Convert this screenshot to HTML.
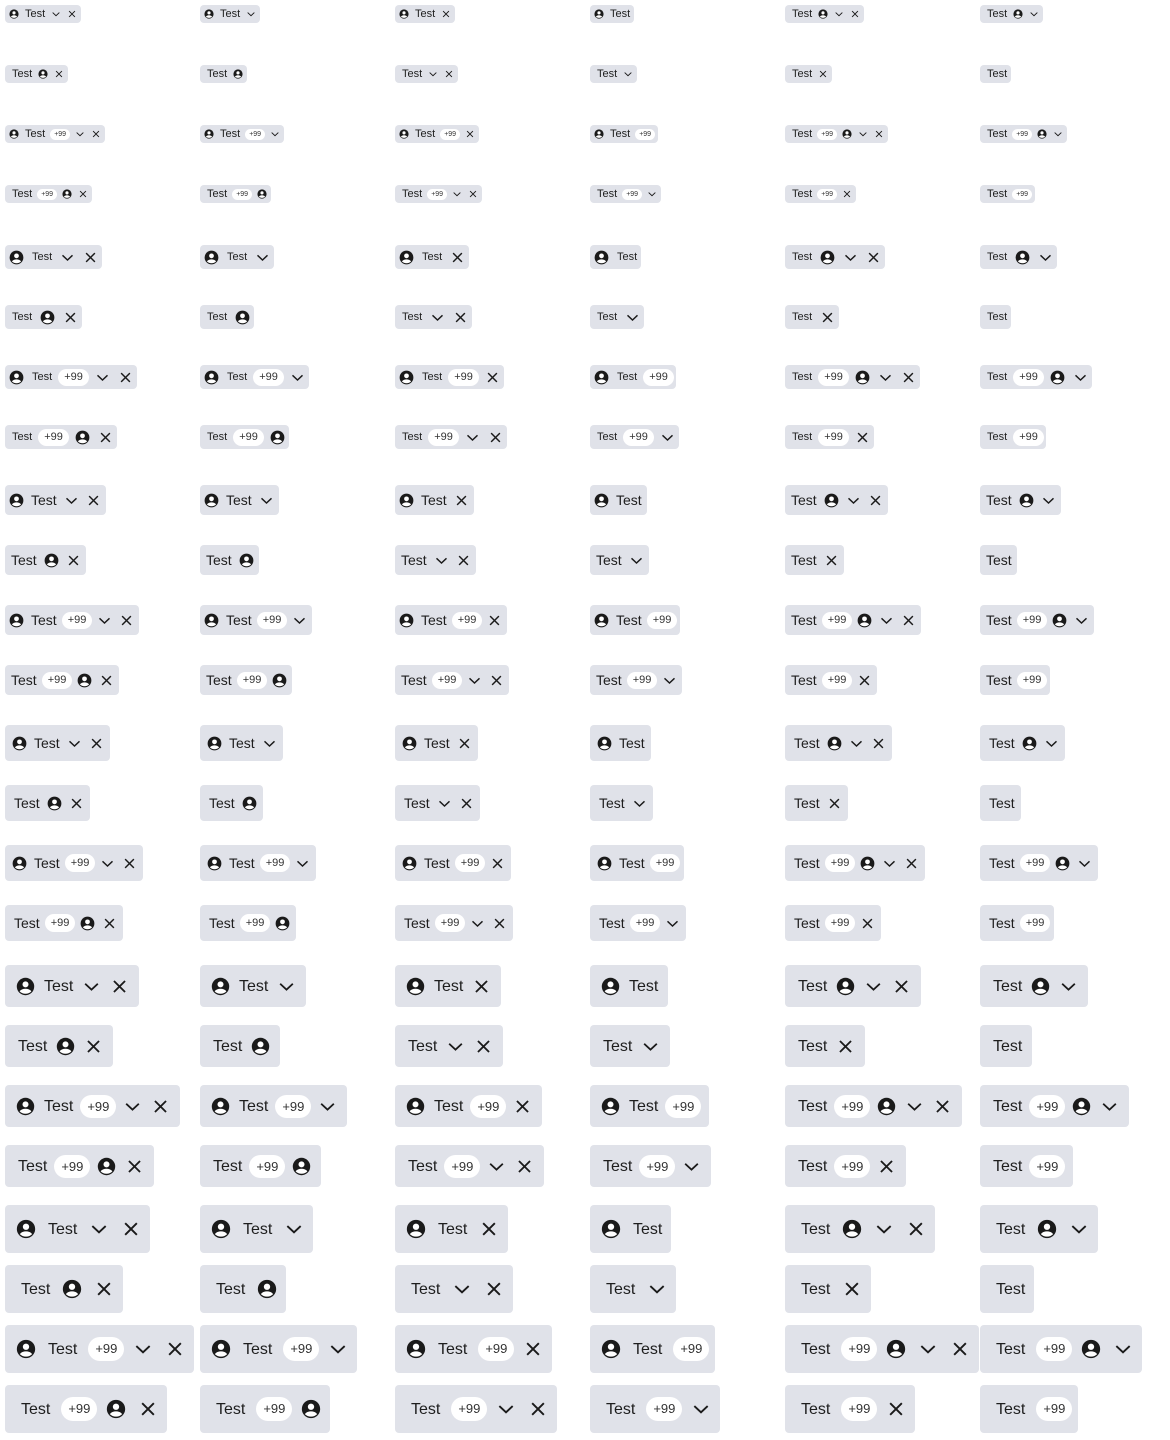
<!DOCTYPE html>
<html><head><meta charset="utf-8"><style>
html,body{margin:0;padding:0;background:#fff;width:1170px;height:1440px;overflow:hidden}
body{position:relative;font-family:"Liberation Sans",sans-serif}
.c{position:absolute;display:flex;align-items:center;background:#e0e2e9;border-radius:4px;color:#1e1e1e;white-space:nowrap;box-sizing:border-box}
.c b{font-weight:400}
.c em{font-style:normal;background:#fff;border-radius:99px;text-align:center;color:#333;display:block;margin:0 -2px}
.c svg{flex:none;display:block}
.s1{height:18px;padding:0 4px;gap:6px;font-size:11px}.s1.t{padding-left:7px}.s1 svg{width:10px;height:10px}.s1 em{font-size:7px;height:11px;line-height:11px;padding:0 4px;margin:0 -1px}
.s2{height:24px;padding:0 4px;gap:8px;font-size:11px}.s2.t{padding-left:7px}.s2 svg{width:15px;height:15px}.s2 em{font-size:11px;height:17px;line-height:17px;padding:0 6px}
.s3{height:30px;padding:0 5px 0 4px;gap:7px;font-size:14px}.s3.t{padding-left:6px}.s3 svg{width:15px;height:15px}.s3 em{font-size:11px;height:17px;line-height:17px;padding:0 6px}
.s4{height:36px;padding:0 6px 0 7px;gap:7px;font-size:14px}.s4.t{padding-left:9px}.s4 svg{width:15px;height:15px}.s4 em{font-size:11px;height:18px;line-height:18px;padding:0 6px}
.s5{height:42px;padding:0 10px 0 11px;gap:9px;font-size:16px}.s5.t{padding-left:13px}.s5 svg{width:19px;height:19px}.s5 em{font-size:13px;height:23px;line-height:23px;padding:0 7px}
.s6{height:48px;padding:0 9px 0 11px;gap:12px;font-size:16px}.s6.t{padding-left:16px}.s6 svg{width:20px;height:20px}.s6 em{font-size:13px;height:24px;line-height:24px;padding:0 7px;margin:0 -3px 0 -1px}
.s5 b,.s6 b{position:relative;top:1px}
</style></head><body>
<svg width="0" height="0" style="position:absolute"><defs>
<symbol id="u" viewBox="0 0 24 24"><circle cx="12" cy="12" r="11" fill="#1a1a1a"/><circle cx="12" cy="9.3" r="3.8" fill="#fff"/><path d="M4.6 18.2C6.3 15.9 9 14.9 12 14.9S17.7 15.9 19.4 18.2C17.6 20.1 15 21.2 12 21.2S6.4 20.1 4.6 18.2Z" fill="#fff"/></symbol>
<symbol id="v" viewBox="0 0 24 24"><polyline points="4,8.5 12,16 20,8.5" fill="none" stroke="#1a1a1a" stroke-width="2.3"/></symbol>
<symbol id="x" viewBox="0 0 24 24"><path d="M5 5L19 19M19 5L5 19" fill="none" stroke="#1a1a1a" stroke-width="2.3"/></symbol>
</defs></svg>

<!-- XS -->
<div class="c s1" style="left:5px;top:5px"><svg><use href="#u"/></svg><b>Test</b><svg><use href="#v"/></svg><svg><use href="#x"/></svg></div>
<div class="c s1" style="left:200px;top:5px"><svg><use href="#u"/></svg><b>Test</b><svg><use href="#v"/></svg></div>
<div class="c s1" style="left:395px;top:5px"><svg><use href="#u"/></svg><b>Test</b><svg><use href="#x"/></svg></div>
<div class="c s1" style="left:590px;top:5px"><svg><use href="#u"/></svg><b>Test</b></div>
<div class="c s1 t" style="left:785px;top:5px"><b>Test</b><svg><use href="#u"/></svg><svg><use href="#v"/></svg><svg><use href="#x"/></svg></div>
<div class="c s1 t" style="left:980px;top:5px"><b>Test</b><svg><use href="#u"/></svg><svg><use href="#v"/></svg></div>

<div class="c s1 t" style="left:5px;top:65px"><b>Test</b><svg><use href="#u"/></svg><svg><use href="#x"/></svg></div>
<div class="c s1 t" style="left:200px;top:65px"><b>Test</b><svg><use href="#u"/></svg></div>
<div class="c s1 t" style="left:395px;top:65px"><b>Test</b><svg><use href="#v"/></svg><svg><use href="#x"/></svg></div>
<div class="c s1 t" style="left:590px;top:65px"><b>Test</b><svg><use href="#v"/></svg></div>
<div class="c s1 t" style="left:785px;top:65px"><b>Test</b><svg><use href="#x"/></svg></div>
<div class="c s1 t" style="left:980px;top:65px"><b>Test</b></div>

<div class="c s1" style="left:5px;top:125px"><svg><use href="#u"/></svg><b>Test</b><em>+99</em><svg><use href="#v"/></svg><svg><use href="#x"/></svg></div>
<div class="c s1" style="left:200px;top:125px"><svg><use href="#u"/></svg><b>Test</b><em>+99</em><svg><use href="#v"/></svg></div>
<div class="c s1" style="left:395px;top:125px"><svg><use href="#u"/></svg><b>Test</b><em>+99</em><svg><use href="#x"/></svg></div>
<div class="c s1" style="left:590px;top:125px"><svg><use href="#u"/></svg><b>Test</b><em>+99</em></div>
<div class="c s1 t" style="left:785px;top:125px"><b>Test</b><em>+99</em><svg><use href="#u"/></svg><svg><use href="#v"/></svg><svg><use href="#x"/></svg></div>
<div class="c s1 t" style="left:980px;top:125px"><b>Test</b><em>+99</em><svg><use href="#u"/></svg><svg><use href="#v"/></svg></div>

<div class="c s1 t" style="left:5px;top:185px"><b>Test</b><em>+99</em><svg><use href="#u"/></svg><svg><use href="#x"/></svg></div>
<div class="c s1 t" style="left:200px;top:185px"><b>Test</b><em>+99</em><svg><use href="#u"/></svg></div>
<div class="c s1 t" style="left:395px;top:185px"><b>Test</b><em>+99</em><svg><use href="#v"/></svg><svg><use href="#x"/></svg></div>
<div class="c s1 t" style="left:590px;top:185px"><b>Test</b><em>+99</em><svg><use href="#v"/></svg></div>
<div class="c s1 t" style="left:785px;top:185px"><b>Test</b><em>+99</em><svg><use href="#x"/></svg></div>
<div class="c s1 t" style="left:980px;top:185px"><b>Test</b><em>+99</em></div>

<!-- SM -->
<div class="c s2" style="left:5px;top:245px"><svg><use href="#u"/></svg><b>Test</b><svg><use href="#v"/></svg><svg><use href="#x"/></svg></div>
<div class="c s2" style="left:200px;top:245px"><svg><use href="#u"/></svg><b>Test</b><svg><use href="#v"/></svg></div>
<div class="c s2" style="left:395px;top:245px"><svg><use href="#u"/></svg><b>Test</b><svg><use href="#x"/></svg></div>
<div class="c s2" style="left:590px;top:245px"><svg><use href="#u"/></svg><b>Test</b></div>
<div class="c s2 t" style="left:785px;top:245px"><b>Test</b><svg><use href="#u"/></svg><svg><use href="#v"/></svg><svg><use href="#x"/></svg></div>
<div class="c s2 t" style="left:980px;top:245px"><b>Test</b><svg><use href="#u"/></svg><svg><use href="#v"/></svg></div>

<div class="c s2 t" style="left:5px;top:305px"><b>Test</b><svg><use href="#u"/></svg><svg><use href="#x"/></svg></div>
<div class="c s2 t" style="left:200px;top:305px"><b>Test</b><svg><use href="#u"/></svg></div>
<div class="c s2 t" style="left:395px;top:305px"><b>Test</b><svg><use href="#v"/></svg><svg><use href="#x"/></svg></div>
<div class="c s2 t" style="left:590px;top:305px"><b>Test</b><svg><use href="#v"/></svg></div>
<div class="c s2 t" style="left:785px;top:305px"><b>Test</b><svg><use href="#x"/></svg></div>
<div class="c s2 t" style="left:980px;top:305px"><b>Test</b></div>

<div class="c s2" style="left:5px;top:365px"><svg><use href="#u"/></svg><b>Test</b><em>+99</em><svg><use href="#v"/></svg><svg><use href="#x"/></svg></div>
<div class="c s2" style="left:200px;top:365px"><svg><use href="#u"/></svg><b>Test</b><em>+99</em><svg><use href="#v"/></svg></div>
<div class="c s2" style="left:395px;top:365px"><svg><use href="#u"/></svg><b>Test</b><em>+99</em><svg><use href="#x"/></svg></div>
<div class="c s2" style="left:590px;top:365px"><svg><use href="#u"/></svg><b>Test</b><em>+99</em></div>
<div class="c s2 t" style="left:785px;top:365px"><b>Test</b><em>+99</em><svg><use href="#u"/></svg><svg><use href="#v"/></svg><svg><use href="#x"/></svg></div>
<div class="c s2 t" style="left:980px;top:365px"><b>Test</b><em>+99</em><svg><use href="#u"/></svg><svg><use href="#v"/></svg></div>

<div class="c s2 t" style="left:5px;top:425px"><b>Test</b><em>+99</em><svg><use href="#u"/></svg><svg><use href="#x"/></svg></div>
<div class="c s2 t" style="left:200px;top:425px"><b>Test</b><em>+99</em><svg><use href="#u"/></svg></div>
<div class="c s2 t" style="left:395px;top:425px"><b>Test</b><em>+99</em><svg><use href="#v"/></svg><svg><use href="#x"/></svg></div>
<div class="c s2 t" style="left:590px;top:425px"><b>Test</b><em>+99</em><svg><use href="#v"/></svg></div>
<div class="c s2 t" style="left:785px;top:425px"><b>Test</b><em>+99</em><svg><use href="#x"/></svg></div>
<div class="c s2 t" style="left:980px;top:425px"><b>Test</b><em>+99</em></div>

<!-- MD -->
<div class="c s3" style="left:5px;top:485px"><svg><use href="#u"/></svg><b>Test</b><svg><use href="#v"/></svg><svg><use href="#x"/></svg></div>
<div class="c s3" style="left:200px;top:485px"><svg><use href="#u"/></svg><b>Test</b><svg><use href="#v"/></svg></div>
<div class="c s3" style="left:395px;top:485px"><svg><use href="#u"/></svg><b>Test</b><svg><use href="#x"/></svg></div>
<div class="c s3" style="left:590px;top:485px"><svg><use href="#u"/></svg><b>Test</b></div>
<div class="c s3 t" style="left:785px;top:485px"><b>Test</b><svg><use href="#u"/></svg><svg><use href="#v"/></svg><svg><use href="#x"/></svg></div>
<div class="c s3 t" style="left:980px;top:485px"><b>Test</b><svg><use href="#u"/></svg><svg><use href="#v"/></svg></div>

<div class="c s3 t" style="left:5px;top:545px"><b>Test</b><svg><use href="#u"/></svg><svg><use href="#x"/></svg></div>
<div class="c s3 t" style="left:200px;top:545px"><b>Test</b><svg><use href="#u"/></svg></div>
<div class="c s3 t" style="left:395px;top:545px"><b>Test</b><svg><use href="#v"/></svg><svg><use href="#x"/></svg></div>
<div class="c s3 t" style="left:590px;top:545px"><b>Test</b><svg><use href="#v"/></svg></div>
<div class="c s3 t" style="left:785px;top:545px"><b>Test</b><svg><use href="#x"/></svg></div>
<div class="c s3 t" style="left:980px;top:545px"><b>Test</b></div>

<div class="c s3" style="left:5px;top:605px"><svg><use href="#u"/></svg><b>Test</b><em>+99</em><svg><use href="#v"/></svg><svg><use href="#x"/></svg></div>
<div class="c s3" style="left:200px;top:605px"><svg><use href="#u"/></svg><b>Test</b><em>+99</em><svg><use href="#v"/></svg></div>
<div class="c s3" style="left:395px;top:605px"><svg><use href="#u"/></svg><b>Test</b><em>+99</em><svg><use href="#x"/></svg></div>
<div class="c s3" style="left:590px;top:605px"><svg><use href="#u"/></svg><b>Test</b><em>+99</em></div>
<div class="c s3 t" style="left:785px;top:605px"><b>Test</b><em>+99</em><svg><use href="#u"/></svg><svg><use href="#v"/></svg><svg><use href="#x"/></svg></div>
<div class="c s3 t" style="left:980px;top:605px"><b>Test</b><em>+99</em><svg><use href="#u"/></svg><svg><use href="#v"/></svg></div>

<div class="c s3 t" style="left:5px;top:665px"><b>Test</b><em>+99</em><svg><use href="#u"/></svg><svg><use href="#x"/></svg></div>
<div class="c s3 t" style="left:200px;top:665px"><b>Test</b><em>+99</em><svg><use href="#u"/></svg></div>
<div class="c s3 t" style="left:395px;top:665px"><b>Test</b><em>+99</em><svg><use href="#v"/></svg><svg><use href="#x"/></svg></div>
<div class="c s3 t" style="left:590px;top:665px"><b>Test</b><em>+99</em><svg><use href="#v"/></svg></div>
<div class="c s3 t" style="left:785px;top:665px"><b>Test</b><em>+99</em><svg><use href="#x"/></svg></div>
<div class="c s3 t" style="left:980px;top:665px"><b>Test</b><em>+99</em></div>

<!-- LG -->
<div class="c s4" style="left:5px;top:725px"><svg><use href="#u"/></svg><b>Test</b><svg><use href="#v"/></svg><svg><use href="#x"/></svg></div>
<div class="c s4" style="left:200px;top:725px"><svg><use href="#u"/></svg><b>Test</b><svg><use href="#v"/></svg></div>
<div class="c s4" style="left:395px;top:725px"><svg><use href="#u"/></svg><b>Test</b><svg><use href="#x"/></svg></div>
<div class="c s4" style="left:590px;top:725px"><svg><use href="#u"/></svg><b>Test</b></div>
<div class="c s4 t" style="left:785px;top:725px"><b>Test</b><svg><use href="#u"/></svg><svg><use href="#v"/></svg><svg><use href="#x"/></svg></div>
<div class="c s4 t" style="left:980px;top:725px"><b>Test</b><svg><use href="#u"/></svg><svg><use href="#v"/></svg></div>

<div class="c s4 t" style="left:5px;top:785px"><b>Test</b><svg><use href="#u"/></svg><svg><use href="#x"/></svg></div>
<div class="c s4 t" style="left:200px;top:785px"><b>Test</b><svg><use href="#u"/></svg></div>
<div class="c s4 t" style="left:395px;top:785px"><b>Test</b><svg><use href="#v"/></svg><svg><use href="#x"/></svg></div>
<div class="c s4 t" style="left:590px;top:785px"><b>Test</b><svg><use href="#v"/></svg></div>
<div class="c s4 t" style="left:785px;top:785px"><b>Test</b><svg><use href="#x"/></svg></div>
<div class="c s4 t" style="left:980px;top:785px"><b>Test</b></div>

<div class="c s4" style="left:5px;top:845px"><svg><use href="#u"/></svg><b>Test</b><em>+99</em><svg><use href="#v"/></svg><svg><use href="#x"/></svg></div>
<div class="c s4" style="left:200px;top:845px"><svg><use href="#u"/></svg><b>Test</b><em>+99</em><svg><use href="#v"/></svg></div>
<div class="c s4" style="left:395px;top:845px"><svg><use href="#u"/></svg><b>Test</b><em>+99</em><svg><use href="#x"/></svg></div>
<div class="c s4" style="left:590px;top:845px"><svg><use href="#u"/></svg><b>Test</b><em>+99</em></div>
<div class="c s4 t" style="left:785px;top:845px"><b>Test</b><em>+99</em><svg><use href="#u"/></svg><svg><use href="#v"/></svg><svg><use href="#x"/></svg></div>
<div class="c s4 t" style="left:980px;top:845px"><b>Test</b><em>+99</em><svg><use href="#u"/></svg><svg><use href="#v"/></svg></div>

<div class="c s4 t" style="left:5px;top:905px"><b>Test</b><em>+99</em><svg><use href="#u"/></svg><svg><use href="#x"/></svg></div>
<div class="c s4 t" style="left:200px;top:905px"><b>Test</b><em>+99</em><svg><use href="#u"/></svg></div>
<div class="c s4 t" style="left:395px;top:905px"><b>Test</b><em>+99</em><svg><use href="#v"/></svg><svg><use href="#x"/></svg></div>
<div class="c s4 t" style="left:590px;top:905px"><b>Test</b><em>+99</em><svg><use href="#v"/></svg></div>
<div class="c s4 t" style="left:785px;top:905px"><b>Test</b><em>+99</em><svg><use href="#x"/></svg></div>
<div class="c s4 t" style="left:980px;top:905px"><b>Test</b><em>+99</em></div>

<!-- XL -->
<div class="c s5" style="left:5px;top:965px"><svg><use href="#u"/></svg><b>Test</b><svg><use href="#v"/></svg><svg><use href="#x"/></svg></div>
<div class="c s5" style="left:200px;top:965px"><svg><use href="#u"/></svg><b>Test</b><svg><use href="#v"/></svg></div>
<div class="c s5" style="left:395px;top:965px"><svg><use href="#u"/></svg><b>Test</b><svg><use href="#x"/></svg></div>
<div class="c s5" style="left:590px;top:965px"><svg><use href="#u"/></svg><b>Test</b></div>
<div class="c s5 t" style="left:785px;top:965px"><b>Test</b><svg><use href="#u"/></svg><svg><use href="#v"/></svg><svg><use href="#x"/></svg></div>
<div class="c s5 t" style="left:980px;top:965px"><b>Test</b><svg><use href="#u"/></svg><svg><use href="#v"/></svg></div>

<div class="c s5 t" style="left:5px;top:1025px"><b>Test</b><svg><use href="#u"/></svg><svg><use href="#x"/></svg></div>
<div class="c s5 t" style="left:200px;top:1025px"><b>Test</b><svg><use href="#u"/></svg></div>
<div class="c s5 t" style="left:395px;top:1025px"><b>Test</b><svg><use href="#v"/></svg><svg><use href="#x"/></svg></div>
<div class="c s5 t" style="left:590px;top:1025px"><b>Test</b><svg><use href="#v"/></svg></div>
<div class="c s5 t" style="left:785px;top:1025px"><b>Test</b><svg><use href="#x"/></svg></div>
<div class="c s5 t" style="left:980px;top:1025px"><b>Test</b></div>

<div class="c s5" style="left:5px;top:1085px"><svg><use href="#u"/></svg><b>Test</b><em>+99</em><svg><use href="#v"/></svg><svg><use href="#x"/></svg></div>
<div class="c s5" style="left:200px;top:1085px"><svg><use href="#u"/></svg><b>Test</b><em>+99</em><svg><use href="#v"/></svg></div>
<div class="c s5" style="left:395px;top:1085px"><svg><use href="#u"/></svg><b>Test</b><em>+99</em><svg><use href="#x"/></svg></div>
<div class="c s5" style="left:590px;top:1085px"><svg><use href="#u"/></svg><b>Test</b><em>+99</em></div>
<div class="c s5 t" style="left:785px;top:1085px"><b>Test</b><em>+99</em><svg><use href="#u"/></svg><svg><use href="#v"/></svg><svg><use href="#x"/></svg></div>
<div class="c s5 t" style="left:980px;top:1085px"><b>Test</b><em>+99</em><svg><use href="#u"/></svg><svg><use href="#v"/></svg></div>

<div class="c s5 t" style="left:5px;top:1145px"><b>Test</b><em>+99</em><svg><use href="#u"/></svg><svg><use href="#x"/></svg></div>
<div class="c s5 t" style="left:200px;top:1145px"><b>Test</b><em>+99</em><svg><use href="#u"/></svg></div>
<div class="c s5 t" style="left:395px;top:1145px"><b>Test</b><em>+99</em><svg><use href="#v"/></svg><svg><use href="#x"/></svg></div>
<div class="c s5 t" style="left:590px;top:1145px"><b>Test</b><em>+99</em><svg><use href="#v"/></svg></div>
<div class="c s5 t" style="left:785px;top:1145px"><b>Test</b><em>+99</em><svg><use href="#x"/></svg></div>
<div class="c s5 t" style="left:980px;top:1145px"><b>Test</b><em>+99</em></div>

<!-- XXL -->
<div class="c s6" style="left:5px;top:1205px"><svg><use href="#u"/></svg><b>Test</b><svg><use href="#v"/></svg><svg><use href="#x"/></svg></div>
<div class="c s6" style="left:200px;top:1205px"><svg><use href="#u"/></svg><b>Test</b><svg><use href="#v"/></svg></div>
<div class="c s6" style="left:395px;top:1205px"><svg><use href="#u"/></svg><b>Test</b><svg><use href="#x"/></svg></div>
<div class="c s6" style="left:590px;top:1205px"><svg><use href="#u"/></svg><b>Test</b></div>
<div class="c s6 t" style="left:785px;top:1205px"><b>Test</b><svg><use href="#u"/></svg><svg><use href="#v"/></svg><svg><use href="#x"/></svg></div>
<div class="c s6 t" style="left:980px;top:1205px"><b>Test</b><svg><use href="#u"/></svg><svg><use href="#v"/></svg></div>

<div class="c s6 t" style="left:5px;top:1265px"><b>Test</b><svg><use href="#u"/></svg><svg><use href="#x"/></svg></div>
<div class="c s6 t" style="left:200px;top:1265px"><b>Test</b><svg><use href="#u"/></svg></div>
<div class="c s6 t" style="left:395px;top:1265px"><b>Test</b><svg><use href="#v"/></svg><svg><use href="#x"/></svg></div>
<div class="c s6 t" style="left:590px;top:1265px"><b>Test</b><svg><use href="#v"/></svg></div>
<div class="c s6 t" style="left:785px;top:1265px"><b>Test</b><svg><use href="#x"/></svg></div>
<div class="c s6 t" style="left:980px;top:1265px"><b>Test</b></div>

<div class="c s6" style="left:5px;top:1325px"><svg><use href="#u"/></svg><b>Test</b><em>+99</em><svg><use href="#v"/></svg><svg><use href="#x"/></svg></div>
<div class="c s6" style="left:200px;top:1325px"><svg><use href="#u"/></svg><b>Test</b><em>+99</em><svg><use href="#v"/></svg></div>
<div class="c s6" style="left:395px;top:1325px"><svg><use href="#u"/></svg><b>Test</b><em>+99</em><svg><use href="#x"/></svg></div>
<div class="c s6" style="left:590px;top:1325px"><svg><use href="#u"/></svg><b>Test</b><em>+99</em></div>
<div class="c s6 t" style="left:785px;top:1325px"><b>Test</b><em>+99</em><svg><use href="#u"/></svg><svg><use href="#v"/></svg><svg><use href="#x"/></svg></div>
<div class="c s6 t" style="left:980px;top:1325px"><b>Test</b><em>+99</em><svg><use href="#u"/></svg><svg><use href="#v"/></svg></div>

<div class="c s6 t" style="left:5px;top:1385px"><b>Test</b><em>+99</em><svg><use href="#u"/></svg><svg><use href="#x"/></svg></div>
<div class="c s6 t" style="left:200px;top:1385px"><b>Test</b><em>+99</em><svg><use href="#u"/></svg></div>
<div class="c s6 t" style="left:395px;top:1385px"><b>Test</b><em>+99</em><svg><use href="#v"/></svg><svg><use href="#x"/></svg></div>
<div class="c s6 t" style="left:590px;top:1385px"><b>Test</b><em>+99</em><svg><use href="#v"/></svg></div>
<div class="c s6 t" style="left:785px;top:1385px"><b>Test</b><em>+99</em><svg><use href="#x"/></svg></div>
<div class="c s6 t" style="left:980px;top:1385px"><b>Test</b><em>+99</em></div>
</body></html>
